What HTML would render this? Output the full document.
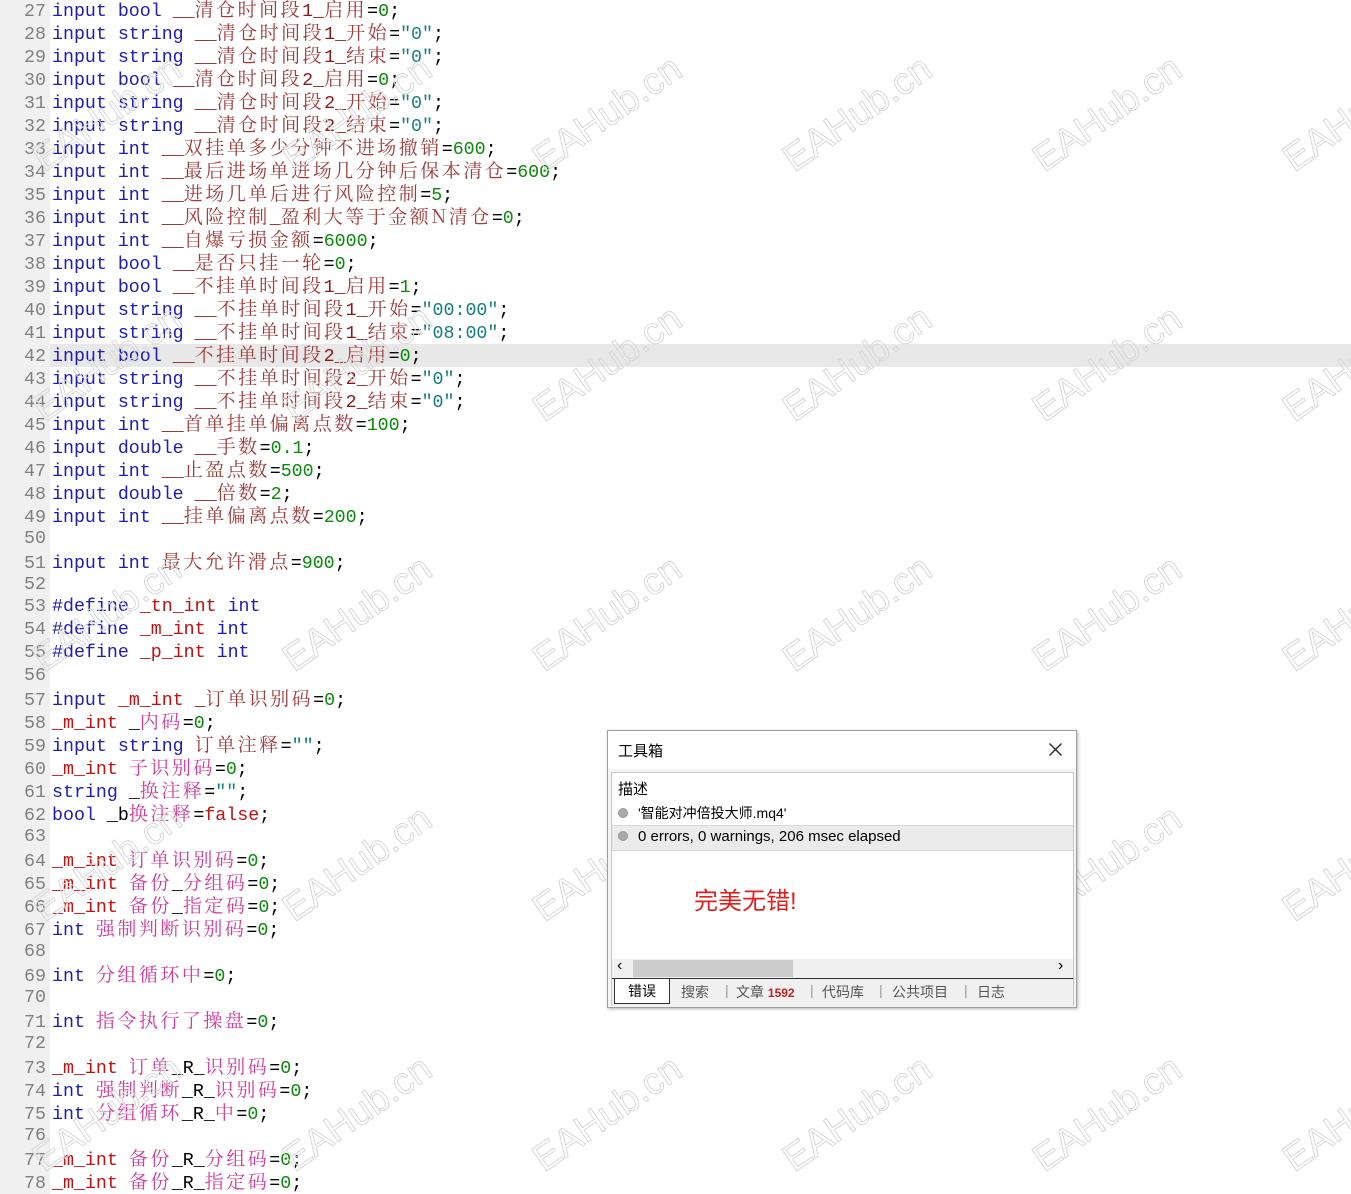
<!DOCTYPE html>
<html><head><meta charset="utf-8"><style>
body{margin:0;width:1351px;height:1194px;overflow:hidden;background:#fff;position:relative;font-family:"Liberation Mono","Noto Sans CJK SC",monospace;}
#gut{position:absolute;left:0;top:0;width:50px;height:1194px;background:#f0f0f0;}
.l{position:absolute;left:0;height:23px;line-height:23px;font-size:18.3px;white-space:pre;width:1351px;overflow:hidden}
.l b{font-weight:normal;display:inline-block;width:46px;text-align:right;color:#808080;margin-right:6px}
.hl{background:linear-gradient(to right,#f0f0f0 50px,#e8e8e8 50px)}
.k{color:#1c1cb8}.v{color:#8a1a1a}.c{color:#a33a3a;font-family:"Noto Serif CJK SC",serif;font-size:19px;letter-spacing:2.5px;line-height:1}
.p{color:#d43a9a;font-family:"Noto Serif CJK SC",serif;font-size:19px;letter-spacing:2.5px;line-height:1}.n{color:#0a8a0a}.s{color:#168080}.r{color:#c01010}
.wm{position:absolute;font-family:"Liberation Sans",sans-serif;font-size:38px;color:transparent;-webkit-text-stroke:1px #d8d8d8;transform:rotate(-35deg);transform-origin:left bottom;white-space:nowrap}
#dlg{position:absolute;left:607px;top:730px;width:468px;height:276px;background:#f4f4f4;border:1px solid #a0a0a0;box-shadow:1px 1px 3px rgba(0,0,0,.3);font-family:"Liberation Sans","Noto Sans CJK SC",sans-serif;font-size:15px}
</style></head><body>
<div id="gut"></div>
<div id="code"></div>
<script>
const L=[
[27,'<i class=k>input bool</i> <i class=v>__</i><i class=c>清仓时间段</i><i class=v>1_</i><i class=c>启用</i>=<i class=n>0</i>;'],
[28,'<i class=k>input string</i> <i class=v>__</i><i class=c>清仓时间段</i><i class=v>1_</i><i class=c>开始</i>=<i class=s>"0"</i>;'],
[29,'<i class=k>input string</i> <i class=v>__</i><i class=c>清仓时间段</i><i class=v>1_</i><i class=c>结束</i>=<i class=s>"0"</i>;'],
[30,'<i class=k>input bool</i> <i class=v>__</i><i class=c>清仓时间段</i><i class=v>2_</i><i class=c>启用</i>=<i class=n>0</i>;'],
[31,'<i class=k>input string</i> <i class=v>__</i><i class=c>清仓时间段</i><i class=v>2_</i><i class=c>开始</i>=<i class=s>"0"</i>;'],
[32,'<i class=k>input string</i> <i class=v>__</i><i class=c>清仓时间段</i><i class=v>2_</i><i class=c>结束</i>=<i class=s>"0"</i>;'],
[33,'<i class=k>input int</i> <i class=v>__</i><i class=c>双挂单多少分钟不进场撤销</i>=<i class=n>600</i>;'],
[34,'<i class=k>input int</i> <i class=v>__</i><i class=c>最后进场单进场几分钟后保本清仓</i>=<i class=n>600</i>;'],
[35,'<i class=k>input int</i> <i class=v>__</i><i class=c>进场几单后进行风险控制</i>=<i class=n>5</i>;'],
[36,'<i class=k>input int</i> <i class=v>__</i><i class=c>风险控制</i><i class=v>_</i><i class=c>盈利大等于金额N清仓</i>=<i class=n>0</i>;'],
[37,'<i class=k>input int</i> <i class=v>__</i><i class=c>自爆亏损金额</i>=<i class=n>6000</i>;'],
[38,'<i class=k>input bool</i> <i class=v>__</i><i class=c>是否只挂一轮</i>=<i class=n>0</i>;'],
[39,'<i class=k>input bool</i> <i class=v>__</i><i class=c>不挂单时间段</i><i class=v>1_</i><i class=c>启用</i>=<i class=n>1</i>;'],
[40,'<i class=k>input string</i> <i class=v>__</i><i class=c>不挂单时间段</i><i class=v>1_</i><i class=c>开始</i>=<i class=s>"00:00"</i>;'],
[41,'<i class=k>input string</i> <i class=v>__</i><i class=c>不挂单时间段</i><i class=v>1_</i><i class=c>结束</i>=<i class=s>"08:00"</i>;'],
[42,'<i class=k>input bool</i> <i class=v>__</i><i class=c>不挂单时间段</i><i class=v>2_</i><i class=c>启用</i>=<i class=n>0</i>;',1],
[43,'<i class=k>input string</i> <i class=v>__</i><i class=c>不挂单时间段</i><i class=v>2_</i><i class=c>开始</i>=<i class=s>"0"</i>;'],
[44,'<i class=k>input string</i> <i class=v>__</i><i class=c>不挂单时间段</i><i class=v>2_</i><i class=c>结束</i>=<i class=s>"0"</i>;'],
[45,'<i class=k>input int</i> <i class=v>__</i><i class=c>首单挂单偏离点数</i>=<i class=n>100</i>;'],
[46,'<i class=k>input double</i> <i class=v>__</i><i class=c>手数</i>=<i class=n>0.1</i>;'],
[47,'<i class=k>input int</i> <i class=v>__</i><i class=c>止盈点数</i>=<i class=n>500</i>;'],
[48,'<i class=k>input double</i> <i class=v>__</i><i class=c>倍数</i>=<i class=n>2</i>;'],
[49,'<i class=k>input int</i> <i class=v>__</i><i class=c>挂单偏离点数</i>=<i class=n>200</i>;'],
[50,''],
[51,'<i class=k>input int</i> <i class=c>最大允许滑点</i>=<i class=n>900</i>;'],
[52,''],
[53,'<i class=k>#define</i> <i class=r>_tn_int</i> <i class=k>int</i>'],
[54,'<i class=k>#define</i> <i class=r>_m_int</i> <i class=k>int</i>'],
[55,'<i class=k>#define</i> <i class=r>_p_int</i> <i class=k>int</i>'],
[56,''],
[57,'<i class=k>input</i> <i class=r>_m_int</i> <i class=v>_</i><i class=c>订单识别码</i>=<i class=n>0</i>;'],
[58,'<i class=r>_m_int</i> _<i class=p>内码</i>=<i class=n>0</i>;'],
[59,'<i class=k>input string</i> <i class=c>订单注释</i>=<i class=s>""</i>;'],
[60,'<i class=r>_m_int</i> <i class=p>子识别码</i>=<i class=n>0</i>;'],
[61,'<i class=k>string</i> _<i class=p>换注释</i>=<i class=s>""</i>;'],
[62,'<i class=k>bool</i> _b<i class=p>换注释</i>=<i class=r>false</i>;'],
[63,''],
[64,'<i class=r>_m_int</i> <i class=p>订单识别码</i>=<i class=n>0</i>;'],
[65,'<i class=r>_m_int</i> <i class=p>备份</i>_<i class=p>分组码</i>=<i class=n>0</i>;'],
[66,'<i class=r>_m_int</i> <i class=p>备份</i>_<i class=p>指定码</i>=<i class=n>0</i>;'],
[67,'<i class=k>int</i> <i class=p>强制判断识别码</i>=<i class=n>0</i>;'],
[68,''],
[69,'<i class=k>int</i> <i class=p>分组循环中</i>=<i class=n>0</i>;'],
[70,''],
[71,'<i class=k>int</i> <i class=p>指令执行了操盘</i>=<i class=n>0</i>;'],
[72,''],
[73,'<i class=r>_m_int</i> <i class=p>订单</i>_R_<i class=p>识别码</i>=<i class=n>0</i>;'],
[74,'<i class=k>int</i> <i class=p>强制判断</i>_R_<i class=p>识别码</i>=<i class=n>0</i>;'],
[75,'<i class=k>int</i> <i class=p>分组循环</i>_R_<i class=p>中</i>=<i class=n>0</i>;'],
[76,''],
[77,'<i class=r>_m_int</i> <i class=p>备份</i>_R_<i class=p>分组码</i>=<i class=n>0</i>;'],
[78,'<i class=r>_m_int</i> <i class=p>备份</i>_R_<i class=p>指定码</i>=<i class=n>0</i>;']];
let h='';L.forEach((x,i)=>{h+='<div class="l'+(x[2]?' hl':'')+'" style="top:'+(i*22.98-1)+'px"><b>'+x[0]+'</b>'+x[1]+'</div>';});
document.getElementById('code').innerHTML=h.replace(/<i /g,'<span ').replace(/<\/i>/g,'</span>');
let w='';for(let r=0;r<5;r++)for(let c=0;c<6;c++){w+='<div class="wm" style="left:'+(50+c*250)+'px;top:'+(138+r*250)+'px">EAHub.cn</div>';}
document.body.insertAdjacentHTML('beforeend',w);
</script>
<div id="dlg">
<div style="position:absolute;left:0;top:0;width:468px;height:38px;background:#fff"></div>
<div style="position:absolute;left:10px;top:9px;font-size:15px">工具箱</div>
<svg style="position:absolute;left:441px;top:12px" width="13" height="13"><path d="M0.5 0.5L12.5 12.5M12.5 0.5L0.5 12.5" stroke="#222" stroke-width="1.3"/></svg>
<div style="position:absolute;left:3px;top:41px;width:461px;height:232px;background:#fff;border:1px solid #c8c8c8">
 <div style="position:absolute;left:6px;top:5px">描述</div>
 <div style="position:absolute;left:6px;top:30px;font-size:14px"><span style="display:inline-block;width:8px;height:8px;border-radius:50%;background:#aaa;border:1px solid #999;margin-right:10px"></span>'智能对冲倍投大师.mq4'</div>
 <div style="position:absolute;left:0;top:52px;width:461px;height:24px;background:#ebebeb;border-top:1px solid #d8d8d8;border-bottom:1px solid #d8d8d8"></div>
 <div style="position:absolute;left:6px;top:55px;font-size:15px"><span style="display:inline-block;width:8px;height:8px;border-radius:50%;background:#aaa;border:1px solid #999;margin-right:10px"></span>0 errors, 0 warnings, 206 msec elapsed</div>
 <div style="position:absolute;left:82px;top:108px;font-size:24px;color:#e02020">完美无错!</div>
 <div style="position:absolute;left:0;top:186px;width:461px;height:19px;background:#f0f0f0"></div>
 <div style="position:absolute;left:21px;top:187px;width:160px;height:17px;background:#cdcdcd"></div>
 <div style="position:absolute;left:5px;top:184px;font-size:16px">‹</div>
 <div style="position:absolute;left:446px;top:184px;font-size:16px">›</div>
 <div style="position:absolute;left:0;top:205px;width:461px;height:27px;background:#f0f0f0;border-top:1px solid #333;font-size:14px;color:#555">
  <span style="position:absolute;left:2px;top:0;width:54px;height:24px;background:#fff;border:1px solid #333;border-top:none;text-align:center;line-height:24px;color:#000">错误</span>
  <span style="position:absolute;left:69px;top:3px">搜索</span>
  <span style="position:absolute;left:113px;top:3px;color:#999">|</span>
  <span style="position:absolute;left:124px;top:3px">文章 <b style="color:#c02020;font-size:12px">1592</b></span>
  <span style="position:absolute;left:198px;top:3px;color:#999">|</span>
  <span style="position:absolute;left:210px;top:3px">代码库</span>
  <span style="position:absolute;left:267px;top:3px;color:#999">|</span>
  <span style="position:absolute;left:280px;top:3px">公共项目</span>
  <span style="position:absolute;left:352px;top:3px;color:#999">|</span>
  <span style="position:absolute;left:365px;top:3px">日志</span>
 </div>
</div>
</div>
</body></html>
